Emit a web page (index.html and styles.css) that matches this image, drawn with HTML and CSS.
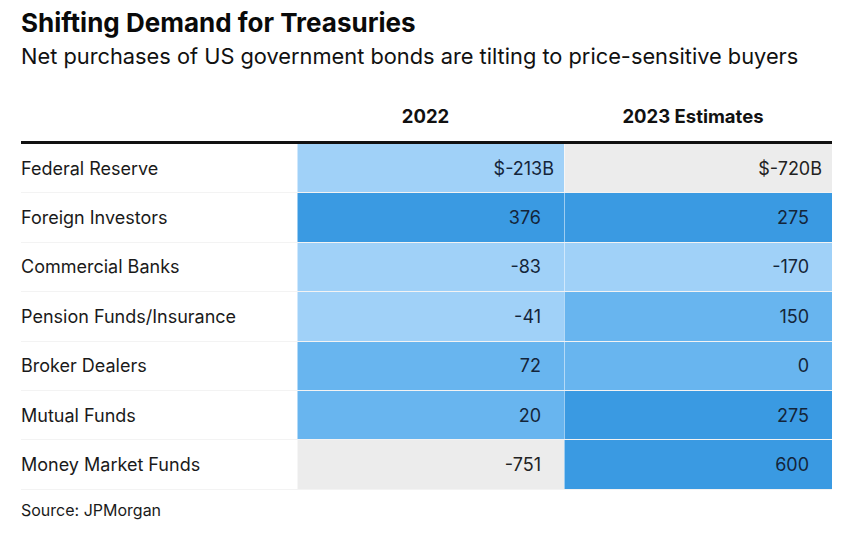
FILE: index.html
```html
<!DOCTYPE html>
<html>
<head>
<meta charset="utf-8">
<link rel="stylesheet" href="styles.css">
</head>
<body>
<div class="chart">
  <h1 class="title">Shifting Demand for Treasuries</h1>
  <p class="subtitle">Net purchases of US government bonds are tilting to price-sensitive buyers</p>
  <div class="table">
    <div class="row head">
      <div class="label"></div>
      <div class="hcell">2022</div>
      <div class="hcell">2023 Estimates</div>
    </div>
    <div class="row">
      <div class="label">Federal Reserve</div>
      <div class="cell light first">$-213B</div>
      <div class="cell gray first">$-720B</div>
    </div>
    <div class="row">
      <div class="label">Foreign Investors</div>
      <div class="cell dark">376</div>
      <div class="cell dark">275</div>
    </div>
    <div class="row">
      <div class="label">Commercial Banks</div>
      <div class="cell light">-83</div>
      <div class="cell light">-170</div>
    </div>
    <div class="row">
      <div class="label">Pension Funds/Insurance</div>
      <div class="cell light">-41</div>
      <div class="cell mid">150</div>
    </div>
    <div class="row">
      <div class="label">Broker Dealers</div>
      <div class="cell mid">72</div>
      <div class="cell mid">0</div>
    </div>
    <div class="row">
      <div class="label">Mutual Funds</div>
      <div class="cell mid">20</div>
      <div class="cell dark">275</div>
    </div>
    <div class="row">
      <div class="label">Money Market Funds</div>
      <div class="cell gray">-751</div>
      <div class="cell dark">600</div>
    </div>
  </div>
  <p class="source">Source: JPMorgan</p>
</div>
</body>
</html>
```

FILE: styles.css
```css
html, body {
  margin: 0;
  padding: 0;
  background: #ffffff;
}
body {
  font-family: Inter, "Liberation Sans", sans-serif;
  color: #111111;
}
.chart {
  padding: 8px 0 0 21px;
  width: 811px;
}
.title {
  margin: 0;
  font-size: 26px;
  line-height: 30px;
  font-weight: 700;
  color: #0a0a0a;
}
.subtitle {
  margin: 5px 0 0 0;
  font-size: 21.8px;
  line-height: 26px;
  font-weight: 400;
  color: #111111;
}
.table {
  margin-top: 21px;
}
.row {
  display: grid;
  grid-template-columns: 276px 267px 268px;
  height: 49.4px;
  border-bottom: 1px solid #f3f3f3;
  box-sizing: border-box;
}
.row.head {
  height: 54px;
  border-bottom: 3px solid #111111;
}
.hcell {
  display: flex;
  align-items: center;
  justify-content: center;
  padding-right: 10px;
  font-size: 18.5px;
  font-weight: 700;
  color: #111111;
}
.label {
  display: flex;
  align-items: center;
  font-size: 18px;
  color: #1a1a1a;
}
.cell {
  display: flex;
  align-items: center;
  justify-content: flex-end;
  padding-right: 23px;
  font-size: 18px;
  color: #14253a;
  border-left: 1px solid rgba(255,255,255,0.5);
}
.cell.first {
  padding-right: 10px;
}
.light { background: #a0d1f8; }
.mid { background: #68b5ef; }
.dark { background: #3a9ae2; }
.gray { background: #ececec; color: #222222; }
.source {
  margin: 10px 0 0 0;
  font-size: 16px;
  line-height: 20px;
  color: #1a1a1a;
}
```
